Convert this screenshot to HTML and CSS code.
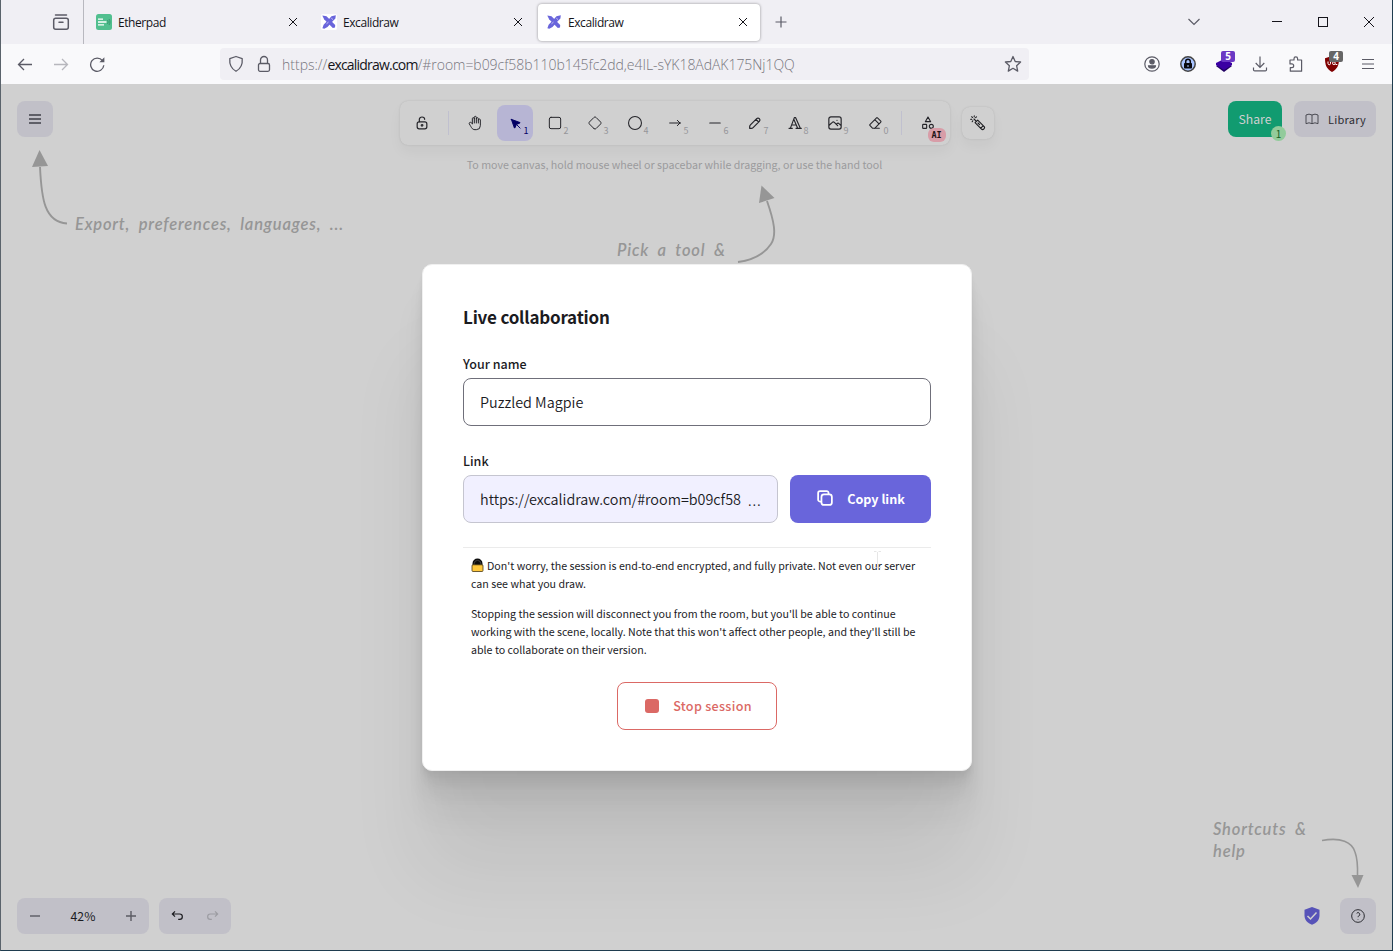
FILE: index.html
```html
<!DOCTYPE html>
<html lang="en">
<head>
<meta charset="utf-8">
<title>Excalidraw</title>
<link rel="stylesheet" href="styles.css">
</head>
<body>
<svg class="defs" width="0" height="0">
  <symbol id="x" viewBox="0 0 16 16"><path d="M4 4l8 8M12 4l-8 8" fill="none" stroke="#15141a" stroke-width="1"/></symbol>
  <symbol id="excali" viewBox="0 0 16 16"><rect width="16" height="16" rx="2" fill="#fff"/><path d="M1.300 1.500l4.200.8 8.700 8.800-.2 2.400-2.200.4-8.700-8.600z" fill="#6965db"/><path d="M14.800 1.200l-4.300 1.100-2.900 3.200-5 5.300-1.200 3.400 1.900.5 3.200-1.800 5.200-5.600 2.700-2.800z" fill="#6965db"/><path d="M5.500 9.800l2-1.700M10.300 4.200l1.700 1.400" stroke="#c9c7f5" stroke-width=".9"/></symbol>
</svg>
<div class="window">
  <header class="tabs">
    <div class="firefox-view"><svg width="18" height="18" viewBox="0 0 18 18" fill="none" stroke="#5b5b66" stroke-width="1.5" stroke-linecap="round"><rect x="1.700" y="5.200" width="14.600" height="11" rx="2"/><path d="M3.500 2h11M7 9.200h4"/></svg></div>
    <div class="tab"><svg width="16" height="16" viewBox="0 0 16 16"><rect width="16" height="16" rx="2.500" fill="#51bf8f"/><path d="M2 5.200h5M2 8h8.500M2 10.800h6" stroke="#fff" stroke-width="1.300"/><path d="M11.500 6c.8 1.300.8 2.700 0 4M13 5c1.300 2 1.300 4 0 6" fill="none" stroke="#318d68" stroke-width=".8"/></svg><span class="tab-title">Etherpad</span><svg class="close" width="16" height="16"><use href="#x"/></svg></div>
    <div class="tab"><svg width="16" height="16"><use href="#excali"/></svg><span class="tab-title">Excalidraw</span><svg class="close" width="16" height="16"><use href="#x"/></svg></div>
    <div class="tab active"><svg width="16" height="16"><use href="#excali"/></svg><span class="tab-title">Excalidraw</span><svg class="close" width="16" height="16"><use href="#x"/></svg></div>
    <svg class="new-tab" width="14" height="14" viewBox="0 0 14 14"><path d="M7 1.500v11M1.500 7h11" stroke="#5b5b66" stroke-width="1.200"/></svg>
    <div class="window-controls">
      <svg width="14" height="14" viewBox="0 0 14 14" fill="none" stroke="#5b5b66" stroke-width="1.200"><path d="M1.500 4l5.500 5.500L12.500 4"/></svg>
      <svg width="12" height="12" viewBox="0 0 12 12"><path d="M1 5.500h10" stroke="#15141a"/></svg>
      <svg width="12" height="12" viewBox="0 0 12 12"><rect x="1.500" y="1.500" width="9" height="9" fill="none" stroke="#15141a"/></svg>
      <svg width="12" height="12" viewBox="0 0 12 12"><path d="M1 1l10 10M11 1L1 11" stroke="#15141a"/></svg>
    </div>
  </header>
  <nav class="navbar">
    <div class="nav-buttons">
      <svg width="16" height="16" viewBox="0 0 16 16" fill="none" stroke="#5b5b66" stroke-width="1.300"><path d="M15 8.500H1.500M7 3L1.500 8.500 7 14"/></svg>
      <svg width="16" height="16" viewBox="0 0 16 16" fill="none" stroke="#b7b7bd" stroke-width="1.300"><path d="M1 8.500h13.500M9 3l5.500 5.500L9 14"/></svg>
      <svg width="16" height="16" viewBox="0 0 16 16" fill="none" stroke="#5b5b66" stroke-width="1.300"><path d="M14.800 9.300A6.600 6.600 0 1 1 13.500 4.700l.5.700"/><path d="M15.400 1.300v5h-5z" fill="#5b5b66" stroke="none"/></svg>
    </div>
    <div class="urlbar">
      <svg width="16" height="18" viewBox="0 0 16 18" fill="none" stroke="#5b5b66" stroke-width="1.300"><path d="M8 1.500l6.200 2.100c.5 5.300-1 9.800-6.200 12.700C2.800 13.400 1.300 8.900 1.800 3.600z" stroke-linejoin="round"/></svg>
      <svg class="padlock" width="14" height="18" viewBox="0 0 14 18" fill="none" stroke="#5b5b66" stroke-width="1.300"><rect x="1.500" y="8.500" width="11" height="7.800" rx="1.500"/><path d="M3.500 8.500V5a3.500 3.500 0 0 1 7 0v3.500"/></svg>
      <span class="url"><span class="proto">https://</span><b>excalidraw.com</b><span class="path">/#room=b09cf58b110b145fc2dd,e4IL-sYK18AdAK175Nj1QQ</span></span>
      <svg class="star" width="18" height="18" viewBox="0 0 18 18" fill="none" stroke="#5b5b66" stroke-width="1.300" stroke-linejoin="round"><path d="M9 1.500l2.200 5 5.400.5-4 3.700 1.100 5.400L9 13.300l-4.700 2.800 1.100-5.400-4-3.700 5.400-.5z"/></svg>
    </div>
    <div class="extensions">
      <svg width="16" height="16" viewBox="0 0 16 16" fill="none" stroke="#5b5b66" stroke-width="1.200"><circle cx="8" cy="8" r="7.200"/><circle cx="8" cy="5.800" r="2.200" fill="#5b5b66"/><path d="M4.500 9.800h7c0 3-7 3-7 0z" fill="#5b5b66"/></svg>
      <svg width="16" height="16" viewBox="0 0 16 16"><circle cx="8" cy="8" r="7.200" fill="#a9c4ff" stroke="#444" stroke-width="1.500"/><rect x="4" y="7" width="8" height="5.500" rx=".8" fill="#08080e"/><path d="M5.700 7V5.600a2.300 2.300 0 0 1 4.600 0V7" fill="none" stroke="#08080e" stroke-width="1.500"/><path d="M8 9v2" stroke="#a9c4ff"/></svg>
      <span class="ext"><svg width="18" height="18" viewBox="0 0 18 18"><path d="M1 11l8-4 8 4-8 6z" fill="#210062"/><path d="M1 8l8-4 8 4v2l-8 5-8-5z" fill="#3b00a3"/></svg><i class="count purple">5</i></span>
      <svg width="16" height="16" viewBox="0 0 16 16" fill="none" stroke="#5b5b66" stroke-width="1.200"><path d="M8 .5v10.800M3.700 7L8 11.300 12.300 7M1.500 11.500v2.200c0 .7.500 1.200 1.200 1.200h10.600c.7 0 1.200-.5 1.200-1.200v-2.200"/></svg>
      <svg width="16" height="16" viewBox="0 0 16 16" fill="none" stroke="#5b5b66" stroke-width="1.200"><path d="M2 4h4V2.700a1.800 1.800 0 0 1 3.600 0V4h4v11.200H2.300v-3.500h1.500a1.900 1.900 0 0 0 0-3.800H2z" stroke-linejoin="round"/></svg>
      <span class="ext"><svg width="18" height="18" viewBox="0 0 18 18"><path d="M9 1l7 2.300c0 6-1 10.500-7 13.700C3 13.800 2 9.300 2 3.300z" fill="#800000"/><path d="M5 6.500v2c0 1.700 2.500 1.700 2.500 0v-2M9.500 8.200a1.400 1.400 0 1 0 2.800 0 1.400 1.400 0 1 0-2.800 0M12.500 9.500h1.800" fill="none" stroke="#fff"/></svg><i class="count gray">4</i></span>
      <svg class="app-menu" width="14" height="14" viewBox="0 0 14 14" stroke="#5b5b66" stroke-width="1.200"><path d="M1 2.500h12M1 7h12M1 11.500h12"/></svg>
    </div>
  </nav>
  <main class="canvas">
    <div class="topbar">
      <div class="side"><button class="btn square"><svg width="12" height="12" viewBox="0 0 12 12" stroke="#5f5f68" stroke-width="1.800"><path d="M0 2h12M0 6h12M0 10h12"/></svg></button></div>
      <div class="tools">
        <div class="island">
          <span class="tool"><svg viewBox="0 0 20 20" stroke-width="1.500"><path d="M13.542 8.542H6.458a2.500 2.500 0 0 0-2.500 2.500v3.750a2.500 2.500 0 0 0 2.500 2.500h7.084a2.500 2.500 0 0 0 2.500-2.500v-3.750a2.500 2.500 0 0 0-2.500-2.500Z"/><path d="M10 13.958a1.042 1.042 0 1 0 0-2.083 1.042 1.042 0 0 0 0 2.083Z"/><path d="M6.667 8.333V5.417C6.667 3.806 8.159 2.500 10 2.500c1.841 0 3.333 1.306 3.333 2.917"/></svg></span>
          <span class="divider"></span>
          <span class="tool"><svg viewBox="0 0 24 24" stroke-width="1.500"><path d="M8 13v-7.500a1.500 1.500 0 0 1 3 0v6.500M11 5.500v-2a1.500 1.500 0 1 1 3 0v8.500M14 5.500a1.500 1.500 0 0 1 3 0v6.500M17 7.500a1.500 1.500 0 0 1 3 0v8.500a6 6 0 0 1-6 6h-2c-2 0-3.700-.8-5-2.700-.5-.8-1.600-2.700-3.500-6a1.500 1.500 0 0 1 .5-2.050a1.900 1.900 0 0 1 2.300.3l1.700 1.450"/></svg></span>
          <span class="tool selected"><svg viewBox="0 0 22 22" stroke-width="1.300"><path fill="#030064" d="M6 6l4.153 11.793a.365.365 0 0 0 .331.207.366.366 0 0 0 .332-.207L13 13l4.787-1.994a.355.355 0 0 0 0-.646L6 6z"/><path d="M13.500 13.500l4.500 4.500"/></svg><small>1</small></span>
          <span class="tool"><svg viewBox="0 0 24 24"><rect x="3.500" y="3.500" width="17" height="17" rx="2.500"/></svg><small>2</small></span>
          <span class="tool"><svg viewBox="0 0 24 24" stroke-width="1.500"><path d="M10.500 20.400l-6.900-6.900c-.781-.781-.781-2.219 0-3l6.900-6.900c.781-.781 2.219-.781 3 0l6.900 6.900c.781.781.781 2.219 0 3l-6.900 6.900c-.781.781-2.219.781-3 0z"/></svg><small>3</small></span>
          <span class="tool"><svg viewBox="0 0 24 24" stroke-width="1.600"><circle cx="12" cy="12" r="9.700"/></svg><small>4</small></span>
          <span class="tool"><svg viewBox="0 0 24 24"><path d="M4 12h16M15.500 16l4-4M15.500 8l4 4"/></svg><small>5</small></span>
          <span class="tool"><svg viewBox="0 0 20 20" stroke-width="1.500"><path d="M3.500 10h13"/></svg><small>6</small></span>
          <span class="tool"><svg viewBox="0 0 20 20" stroke-width="1.500"><path d="m7.643 15.690 7.774-7.773a2.357 2.357 0 1 0-3.334-3.334L4.310 12.357a3.333 3.333 0 0 0-.977 2.357v1.953h1.953c.884 0 1.732-.352 2.357-.977ZM11.250 5.417l3.333 3.333"/></svg><small>7</small></span>
          <span class="tool"><svg viewBox="0 0 24 24" stroke-width="1.700"><path d="M3 20h5M13.500 20h8M6.900 15h6.900M10.200 6.300l5.800 13.700M5 20l6-16h2l7 16"/></svg><small>8</small></span>
          <span class="tool"><svg viewBox="0 0 20 20" stroke-width="1.500"><path d="M12.500 6.667h.01M4.910 2.300h10.180a2.600 2.600 0 0 1 2.600 2.600v10.200a2.600 2.600 0 0 1-2.600 2.600H4.909a2.600 2.600 0 0 1-2.600-2.600V4.909a2.600 2.600 0 0 1 2.600-2.600ZM3 12.500l3.667-3.333c.773-.745 1.726-.745 2.500 0l4.166 4.166M11.667 11.667l.833-.834c.774-.744 1.726-.744 2.500 0l1.900 1.667"/></svg><small>9</small></span>
          <span class="tool"><svg viewBox="0 0 24 24" stroke-width="1.600"><path d="M18.500 20H8.500l-4.210-4.300a1 1 0 0 1 0-1.410l10-10a1 1 0 0 1 1.410 0l5 5a1 1 0 0 1 0 1.410l-9.200 9.300M18 13.300l-6.300-6.300"/></svg><small>0</small></span>
          <span class="divider"></span>
          <span class="tool"><svg viewBox="0 0 24 24" stroke-width="1.700"><path d="M12 3l-4 7h8zM4 14m0 1a1 1 0 0 1 1-1h4a1 1 0 0 1 1 1v4a1 1 0 0 1-1 1h-4a1 1 0 0 1-1-1z"/><circle cx="17" cy="17" r="3"/></svg><em class="ai">AI</em></span>
        </div>
        <div class="laser"><svg viewBox="0 0 20 20" width="16" height="16" stroke-width="1.350"><g transform="rotate(90 10 10)"><path d="m9.644 13.690 7.774-7.773a2.357 2.357 0 0 0-3.334-3.334l-7.773 7.774L8 12l1.643 1.690ZM13.250 3.417l3.333 3.333M10 10l2-2M5 15l3-3M2.156 17.894l1-1M5.453 19.029l-.144-1.407M2.377 11.887l.866 1.118M8.354 17.273l-1.194-.758M.953 14.652l1.408.13"/></g></svg></div>
      </div>
      <div class="side right">
        <button class="share">Share<span class="peers">1</span></button>
        <button class="btn library"><svg width="16" height="16" viewBox="0 0 24 24" fill="none" stroke="#4a4a52" stroke-width="1.500"><path d="M3 19a9 9 0 0 1 9 0a9 9 0 0 1 9 0M3 6a9 9 0 0 1 9 0a9 9 0 0 1 9 0M3 6v13M12 6v13M21 6v13"/></svg>Library</button>
      </div>
    </div>
    <p class="tip">To move canvas, hold mouse wheel or spacebar while dragging, or use the hand tool</p>

    <svg class="hint-arrow menu-arrow" width="40" height="80" viewBox="0 0 40 80"><path d="M10 18C11.500 50 14.500 73 37 74.500" fill="none" stroke="#969696" stroke-width="1.900"/><path d="M9.500 1L2 18l16-1z" fill="#969696"/></svg>
    <span class="hint menu-hint">Export, preferences, languages, ...</span>
    <svg class="hint-arrow tool-arrow" width="40" height="80" viewBox="0 0 40 80"><path d="M30 16C37 36 40 50 34 59Q24 74 1 77" fill="none" stroke="#969696" stroke-width="1.900"/><path d="M24.500.500L22 18l15.500-5z" fill="#969696"/></svg>
    <span class="hint tool-hint">Pick a tool &amp;</span>
    <span class="hint help-hint">Shortcuts &amp;<br>help</span>
    <svg class="hint-arrow help-arrow" width="50" height="56" viewBox="0 0 50 56"><path d="M1 7.500C20 4 31 9 34 19Q37 27 36.500 43" fill="none" stroke="#969696" stroke-width="1.600"/><path d="M30.500 42h12L37 55z" fill="#969696"/></svg>

    <footer class="footer">
      <div class="group zoom"><svg width="12" height="12" viewBox="0 0 12 12" stroke="#5b5b63" stroke-width="1.400"><path d="M1 6h10"/></svg><span>42%</span><svg width="12" height="12" viewBox="0 0 12 12" stroke="#5b5b63" stroke-width="1.400"><path d="M1 6h10M6 1v10"/></svg></div>
      <div class="group history"><svg width="16" height="16" viewBox="0 0 20 20" fill="none" stroke="#1b1b1f" stroke-width="1.500"><path d="M7.500 10.833 4.167 7.500 7.500 4.167M4.167 7.500h9.166a3.333 3.333 0 0 1 0 6.667H11.500"/></svg><svg width="16" height="16" viewBox="0 0 20 20" fill="none" stroke="#9c9ca2" stroke-width="1.500"><path d="M12.500 10.833 15.833 7.500 12.500 4.167M15.833 7.500H6.667a3.333 3.333 0 0 0 0 6.667H8.500"/></svg></div>
      <svg class="shield" width="16" height="18" viewBox="0 0 16 18"><path d="M8 0l7.500 2.700v5.800c0 4.500-3 7.500-7.500 9.300C3.500 16 .5 13 .5 8.500V2.700z" fill="#5753b8"/><path d="M3.500 9l3 3 6-6.500" fill="none" stroke="#d0d0d0" stroke-width="1.500"/></svg>
      <button class="btn square"><svg width="16" height="16" viewBox="0 0 24 24" fill="none" stroke="#2d2d33" stroke-width="1.500"><circle cx="12" cy="12" r="9.500"/><path d="M12 17v.8M12 13.800v-.3a1.500 1.500 0 0 1 1-1.500a2.600 2.600 0 1 0-3-4"/></svg></button>
    </footer>

    <section class="dialog">
      <h2>Live collaboration</h2>
      <label>Your name</label>
      <div class="field name">Puzzled Magpie</div>
      <label>Link</label>
      <div class="link-row">
        <div class="field link"><span class="link-text">https://excalidraw.com/#room=b09cf58</span><span class="more">…</span></div>
        <button class="copy"><svg width="20" height="20" viewBox="0 0 20 20" fill="none" stroke="#fff" stroke-width="1.750"><path d="M14.375 6.458H8.958a2.500 2.500 0 0 0-2.500 2.500v5.417a2.500 2.500 0 0 0 2.500 2.500h5.417a2.500 2.500 0 0 0 2.500-2.500V8.958a2.500 2.500 0 0 0-2.500-2.500Z"/><path d="M13.542 6.458V5a1.875 1.875 0 0 0-1.875-1.875H5A1.875 1.875 0 0 0 3.125 5v6.667A1.875 1.875 0 0 0 5 13.542h1.458"/></svg><span>Copy link</span></button>
      </div>
      <div class="notes">
        <p><svg class="lock-emoji" width="13" height="14" viewBox="0 0 13 14"><path d="M1.500 8V5.600a5 5 0 0 1 10 0V8z" fill="#0c0c0c"/><path d="M3.200 7V5.700a3.300 3.300 0 0 1 6.600 0V7" fill="none" stroke="#555" stroke-width=".7"/><rect x="1" y="6.800" width="11" height="6.700" rx="1" fill="#ffc83d" stroke="#4a3a14" stroke-width=".8"/></svg><span>Don't worry, the session is end-to-end encrypted, and fully private. Not even our server</span><br><span>can see what you draw.</span></p>
        <p><span>Stopping the session will disconnect you from the room, but you'll be able to continue</span><br><span>working with the scene, locally. Note that this won't affect other people, and they'll still be</span><br><span>able to collaborate on their version.</span></p>
      </div>
      <button class="stop"><i></i><span>Stop session</span></button>
      <svg class="ibeam" width="9" height="18" viewBox="0 0 9 18"><path d="M1 .5h2.500M5.500.500H8M4.500 1v16M1 16.500h2.500M5.500 16.500H8" stroke="#e6e6e6" fill="none"/></svg>
    </section>
  </main>
</div>
</body>
</html>
```

FILE: styles.css
```css
* { box-sizing: border-box; }
body { margin: 0; overflow: hidden; font-family: "Noto Sans CJK JP", "Noto Sans", sans-serif; color: #1b1b1f; }
svg { flex: none; display: block; }
button { font: inherit; border: 0; padding: 0; margin: 0; }
.defs { position: absolute; }
.window { width: 1393px; height: 951px; display: flex; flex-direction: column; border: solid #1f3d4f; border-width: 0 1px 1px; border-left-color: #5a636b; }

/* browser chrome */
.tabs { height: 44px; background: #f0eff4; display: flex; align-items: center; font: 12px "Open Sans", sans-serif; color: #15141a; }
.firefox-view { width: 83px; height: 44px; border-right: 1px solid #b8b8bf; padding: 13px 0 0 51px; }
.tab { width: 225px; display: flex; align-items: center; padding: 0 8px 0 12px; }
.tab-title { margin-left: 6px; flex: 1; letter-spacing: -.42px; line-height: 20px; padding-top: 2px; }
.tab.active { width: 222px; height: 37px; margin-left: 4px; padding: 0 9px 0 8px; background: #fff; border-radius: 4px; box-shadow: 0 0 3px rgba(0,0,0,.4); }
.new-tab { margin-left: 14px; }
.window-controls { margin-left: auto; display: flex; align-items: center; gap: 34px; padding-right: 17px; }
.window-controls svg:first-child { margin-right: 36px; }
.navbar { height: 40px; background: #f9f9fb; display: flex; align-items: center; }
.nav-buttons { display: flex; gap: 20px; padding-left: 16px; width: 219px; }
.urlbar { width: 809px; height: 32px; background: #f0eff4; border-radius: 4px; display: flex; align-items: center; padding: 0 7px 0 8px; }
.padlock { margin-left: 13px; }
.url { margin-left: 11px; padding-top: 2px; flex: 1; font: 300 14px/20px "Open Sans", sans-serif; color: #77767d; white-space: nowrap; }
.url b { font-weight: 400; color: #15141a; letter-spacing: -.8px; }
.path { letter-spacing: -.04px; }
.extensions { margin-left: auto; display: flex; align-items: center; gap: 20px; padding-right: 17px; }
.app-menu { margin-left: 1px; }
.ext { position: relative; width: 16px; }
.ext svg { margin-left: -1px; }
.count { position: absolute; left: 5px; top: -4px; width: 14px; height: 11px; border-radius: 2px; color: #fff; font: bold 10px/11px "Open Sans", sans-serif; text-align: center; }
.purple { background: #6b38c4; }
.gray { background: #666; }

/* canvas, dimmed behind the dialog */
.canvas { position: relative; flex: 1; background: #d0d0d0; display: flex; flex-direction: column; overflow: hidden; padding: 17px 16px 16px; }
.topbar { display: flex; justify-content: space-between; align-items: flex-start; height: 44px; }
.side { width: 150px; display: flex; }
.side.right { justify-content: flex-end; gap: 12px; }
.btn { height: 36px; background: #c1c0c8; border-radius: 8px; display: flex; align-items: center; justify-content: center; color: #2d2d33; }
.square { width: 36px; }
.tools { display: flex; align-items: center; gap: 12px; }
.island { display: flex; gap: 4px; padding: 4px; border-radius: 8px; box-shadow: 0 0 1px rgba(0,0,0,.1), 0 0 3px rgba(0,0,0,.06), 0 7px 14px rgba(0,0,0,.04); }
.tool { position: relative; width: 36px; height: 36px; display: flex; align-items: center; justify-content: center; fill: none; stroke: #25252a; stroke-width: 1.500; stroke-linecap: round; stroke-linejoin: round; }
.tool > svg { width: 16px; height: 16px; }
.tool small { position: absolute; right: 4px; bottom: 4px; font-size: 9px; line-height: 12px; color: #96969a; }
.selected { background: #b7b5d4; border-radius: 8px; stroke: #030064; }
.selected small { color: #030064; }
.divider { width: 1px; height: 24px; margin: 6px 4px; background: #c0c0cf; }
.ai { position: absolute; left: 18px; top: 23px; width: 18px; height: 14px; border-radius: 6px; background: #d89da8; font: bold 8.500px/14px "DejaVu Sans Mono", monospace; text-align: center; color: #211416; }
.laser { width: 32px; height: 32px; border-radius: 8px; display: flex; align-items: center; justify-content: center; box-shadow: 0 0 1px rgba(0,0,0,.1), 0 0 3px rgba(0,0,0,.06), 0 7px 14px rgba(0,0,0,.04); fill: none; stroke: #1b1b1f; stroke-linecap: round; stroke-linejoin: round; }
.share { position: relative; width: 54px; height: 36px; border-radius: 8px; background: #119b70; color: #d0d0d0; font-size: 12.200px; line-height: 36px; }
.peers { position: absolute; right: -4px; bottom: -4px; width: 15px; height: 15px; border-radius: 50%; background: #92cb9b; color: #176126; font-size: 10px; line-height: 15px; text-align: center; }
.library { width: 82px; gap: 8px; font-size: 11px; letter-spacing: .25px; }
.tip { margin: 10px 44px 0 0; text-align: center; font-size: 10.660px; line-height: 20px; color: #9b9b9d; white-space: nowrap; }
.hint, .hint-arrow { position: absolute; }
.hint { font: italic 600 16.500px/22px Lato, sans-serif; color: #969696; white-space: nowrap; letter-spacing: .8px; word-spacing: 4px; }
.menu-arrow { left: 29px; top: 65px; }
.menu-hint { left: 74px; top: 129px; }
.tool-arrow { left: 736px; top: 101px; }
.tool-hint { left: 616px; top: 155px; }
.help-hint { left: 1212px; top: 734px; }
.help-arrow { left: 1320px; top: 749px; }
.footer { margin-top: auto; display: flex; align-items: center; gap: 10px; }
.group { height: 36px; background: #c1c0c8; border-radius: 8px; display: flex; align-items: center; justify-content: space-between; font-size: 12.200px; line-height: 18px; }
.zoom { width: 132px; padding: 0 12px; }
.history { width: 72px; padding: 0 10px; }
.shield { margin-left: auto; margin-right: 10px; }

/* live collaboration dialog */
.dialog { position: absolute; left: 421px; top: 180px; width: 550px; height: 507px; padding: 40px; background: #fff; border: 1px solid #f0f0f0; border-radius: 10px; box-shadow: 0 100px 80px rgba(0,0,0,.07), 0 41.800px 33.400px rgba(0,0,0,.05), 0 22.300px 17.900px rgba(0,0,0,.04), 0 12.500px 10px rgba(0,0,0,.035), 0 6.700px 5.300px rgba(0,0,0,.028), 0 2.800px 2.200px rgba(0,0,0,.02); display: flex; flex-direction: column; }
h2 { margin: 0 0 2px; font-size: 17px; line-height: 24px; font-weight: 700; letter-spacing: -.2px; }
label { display: block; font-size: 12.500px; line-height: 20px; font-weight: 500; margin-top: 23px; margin-bottom: 4px; }
.field { height: 48px; border: 1px solid #6f6f7a; border-radius: 8px; padding: 0 16px; font-size: 14.400px; font-weight: 350; line-height: 46px; white-space: nowrap; }
.name + label { margin-top: 25px; }
.link-row { display: flex; gap: 12px; }
.link { flex: 1; background: #f1f0ff; border-color: #c5c5d0; display: flex; justify-content: space-between; }
.link-text { letter-spacing: -.02px; }
.more { font-family: "Open Sans", sans-serif; font-size: 19px; }
.copy { width: 141px; height: 48px; border-radius: 8px; background: #6965db; color: #fff; display: flex; align-items: center; justify-content: center; gap: 12px; padding: 0 1px 2px 0; font-size: 12.600px; font-weight: 700; }
.notes { margin-top: 24px; border-top: 1px solid #ebebeb; padding: 9px 8px 0; font-size: 10.660px; line-height: 18px; white-space: nowrap; }
.notes p { margin: 0 0 12px; }
.lock-emoji { display: inline-block; vertical-align: -2px; margin-right: 3px; }
.stop { align-self: center; margin-top: 11px; width: 160px; height: 48px; border: 1px solid #db6965; border-radius: 8px; background: #fff; color: #db6965; display: flex; align-items: center; justify-content: center; gap: 14px; padding-left: 3px; font-size: 12.600px; font-weight: 500; letter-spacing: .3px; }
.stop span { padding-bottom: 2px; }
.stop i { width: 14px; height: 14px; border-radius: 3px; background: #db6965; }
.ibeam { position: absolute; left: 450px; top: 286px; }
```
